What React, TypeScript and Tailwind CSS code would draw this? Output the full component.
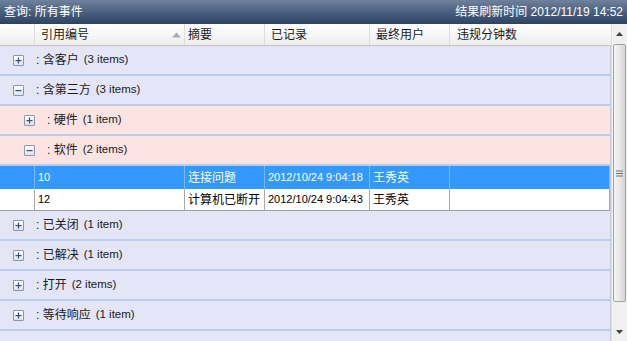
import React from "react";

const cols = "grid grid-cols-[35px_150px_80px_105px_80px_1fr]";
const font = { fontFamily: '"Liberation Sans", "Noto Sans CJK SC", sans-serif' };

function Box({ open }: { open: boolean }) {
  return (
    <span className="inline-flex items-center justify-center w-[11px] h-[11px] border border-[#8a98ae] bg-gradient-to-b from-[#ffffff] to-[#dfe3ea] rounded-[1px]">
      <svg width="7" height="7" viewBox="0 0 7 7">
        <rect x="0.5" y="3" width="6" height="1.2" fill="#35507a" />
        {!open && <rect x="2.9" y="0.5" width="1.2" height="6" fill="#35507a" />}
      </svg>
    </span>
  );
}

function Group({ label, count, open, sub }: { label: string; count: string; open: boolean; sub?: boolean }) {
  return (
    <div
      className={`h-[30px] shrink-0 border-b-2 border-[#b9cde8] flex items-center text-[12px] text-[#1a1a1a] ${
        sub ? "bg-[#fde4e3] pl-[24px]" : "bg-[#e4e6f8] pl-[13px]"
      }`}
    >
      <Box open={open} />
      <span className="ml-[12px]">: {label}</span>
      <span className="ml-[5px] text-[11.5px]">({count})</span>
    </div>
  );
}

function DataRow({ id, sum, date, user, sel }: { id: string; sum: string; date: string; user: string; sel?: boolean }) {
  const cell = `h-full flex items-center px-[3px] ${sel ? "border-r border-[#7cb7f7]" : "border-r border-[#a8a8a8]"}`;
  return (
    <div
      className={`${cols} shrink-0 text-[12px] ${
        sel ? "h-[23px] bg-[#3399ff] text-white" : "h-[22px] bg-white text-black border-b border-[#a0a0a0]"
      }`}
    >
      <div className={cell}></div>
      <div className={`${cell} text-[11px]`}>{id}</div>
      <div className={cell}>{sum}</div>
      <div className={`${cell} text-[11px]`}>{date}</div>
      <div className={cell}>{user}</div>
      <div className={`${cell}`}></div>
    </div>
  );
}

export default function App() {
  return (
    <div className="w-[627px] h-[341px] overflow-hidden bg-white flex flex-col" style={font}>
      <div className="h-[24px] shrink-0 flex items-center justify-between px-[4px] bg-gradient-to-b from-[#6f829c] via-[#4b6080] to-[#2e4260] text-white text-[12px]">
        <span>查询: 所有事件</span>
        <span>
          结果刷新时间 <span className="text-[12px]">2012/11/19 14:52</span>
        </span>
      </div>
      <div className="flex flex-1 min-h-0">
        <div className="w-[611px] flex flex-col">
          <div className={`${cols} h-[22px] shrink-0 bg-gradient-to-b from-[#ffffff] to-[#eeeeee] border-b border-[#c4c4c4] text-[12px] text-[#1a1a1a]`}>
            <div className="border-r border-[#dcdcdc]"></div>
            <div className="border-r border-[#dcdcdc] flex items-center justify-between pl-[6px] pr-[3px]">
              <span>引用编号</span>
              <svg width="9" height="6" viewBox="0 0 9 6">
                <polygon points="0,5.5 9,5.5 4.5,0.5" fill="#a8adb4" />
              </svg>
            </div>
            <div className="border-r border-[#dcdcdc] flex items-center pl-[3px]">摘要</div>
            <div className="border-r border-[#dcdcdc] flex items-center pl-[6px]">已记录</div>
            <div className="border-r border-[#dcdcdc] flex items-center pl-[6px]">最终用户</div>
            <div className="flex items-center pl-[7px]">违规分钟数</div>
          </div>
          <div className="flex-1 flex flex-col overflow-hidden border-r border-[#c4cbd6]">
            <Group label="含客户" count="3 items" open={false} />
            <Group label="含第三方" count="3 items" open />
            <Group label="硬件" count="1 item" open={false} sub />
            <Group label="软件" count="2 items" open sub />
            <DataRow id="10" sum="连接问题" date="2012/10/24 9:04:18" user="王秀英" sel />
            <DataRow id="12" sum="计算机已断开" date="2012/10/24 9:04:43" user="王秀英" />
            <Group label="已关闭" count="1 item" open={false} />
            <Group label="已解决" count="1 item" open={false} />
            <Group label="打开" count="2 items" open={false} />
            <Group label="等待响应" count="1 item" open={false} />
            <div className="h-[30px] shrink-0 bg-[#e4e6f8]"></div>
          </div>
        </div>
        <div className="w-[16px] flex flex-col bg-[#f0f0f0] border-l border-[#e0e0e0]">
          <div className="h-[20px] flex items-center justify-center">
            <svg width="7" height="4" viewBox="0 0 7 4">
              <polygon points="0,4 7,4 3.5,0" fill="#404040" />
            </svg>
          </div>
          <div className="h-[258px] mx-[1px] rounded-[2px] border border-[#a3a3a3] bg-gradient-to-r from-[#f4f4f4] via-[#e8e8e8] to-[#d4d4d4] flex items-center justify-center">
            <svg width="7" height="7" viewBox="0 0 7 7">
              <rect x="0" y="0.5" width="7" height="1" fill="#707070" />
              <rect x="0" y="3" width="7" height="1" fill="#707070" />
              <rect x="0" y="5.5" width="7" height="1" fill="#707070" />
            </svg>
          </div>
          <div className="flex-1"></div>
          <div className="h-[18px] flex items-center justify-center">
            <svg width="7" height="4" viewBox="0 0 7 4">
              <polygon points="0,0 7,0 3.5,4" fill="#404040" />
            </svg>
          </div>
        </div>
      </div>
    </div>
  );
}
